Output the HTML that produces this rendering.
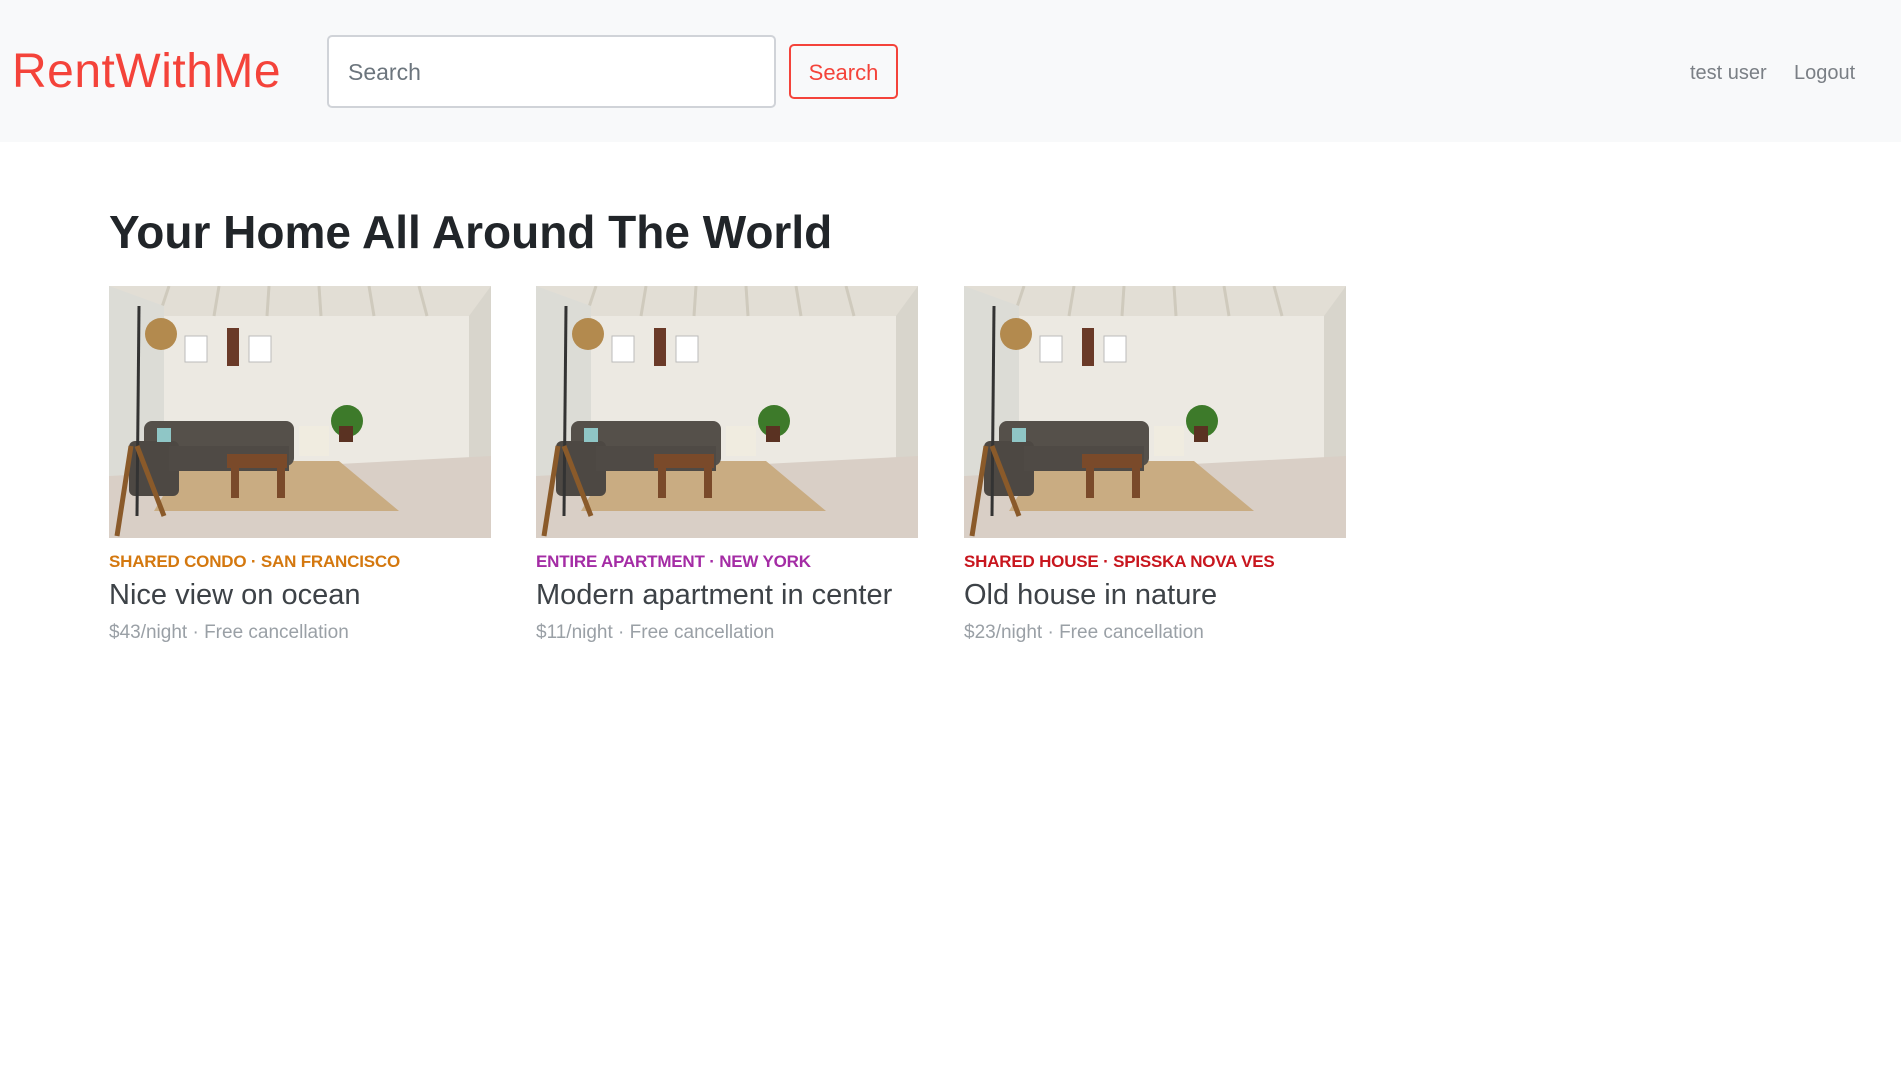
<!DOCTYPE html>
<html><head><meta charset="utf-8"><style>
*{box-sizing:border-box;margin:0;padding:0}
body{width:1901px;height:1080px;background:#fff;font-family:"Liberation Sans",sans-serif;overflow:hidden;position:relative}
.nav{position:absolute;left:0;top:0;width:1901px;height:142px;background:#f8f9fa}
.logo{position:absolute;left:12px;top:44px;font-size:48px;color:#f4433a;letter-spacing:0.5px;line-height:56px}
.inp{position:absolute;left:327px;top:35px;width:449px;height:73px;border:2px solid #d0d3d8;border-radius:5px;background:#fff;font-size:23px;color:#6c757d;padding:22px 0 0 19px}
.btn{position:absolute;left:789px;top:44px;width:109px;height:55px;border:2px solid #f4433a;border-radius:5px;color:#f4433a;font-size:22px;text-align:center;line-height:53px}
.lnk{position:absolute;top:60px;font-size:20px;color:#7a7f85;line-height:26px}
h1{position:absolute;left:109px;top:204px;font-size:46px;font-weight:bold;color:#212529;line-height:56px}
.card{position:absolute;top:286px;width:382px}
.card svg{display:block;width:382px;height:252px}
.sub{margin-top:14px;font-size:17px;font-weight:bold;line-height:20px;letter-spacing:-0.2px}
.t{font-size:29px;color:#3d4247;line-height:36px;margin-top:5px}
.p{font-size:19px;color:#9aa0a6;line-height:24px;margin-top:8px}
</style></head><body>
<svg width="0" height="0" style="position:absolute"><defs>
<g id="room">
<rect width="382" height="252" fill="#ece9e2"/>
<rect x="0" y="0" width="382" height="30" fill="#e2ded5"/>
<g stroke="#cfcabd" stroke-width="3"><line x1="60" y1="0" x2="50" y2="30"/><line x1="110" y1="0" x2="105" y2="30"/><line x1="160" y1="0" x2="158" y2="30"/><line x1="210" y1="0" x2="212" y2="30"/><line x1="260" y1="0" x2="265" y2="30"/><line x1="310" y1="0" x2="318" y2="30"/></g>
<polygon points="0,0 55,20 55,200 0,252" fill="#dcdcd6"/>
<polygon points="382,0 360,30 360,180 382,200" fill="#d8d5cc"/>
<polygon points="0,190 382,170 382,252 0,252" fill="#d9cfc6"/>
<rect x="76" y="50" width="22" height="26" fill="#fff" stroke="#bbb"/>
<rect x="140" y="50" width="22" height="26" fill="#fff" stroke="#bbb"/>
<rect x="118" y="42" width="12" height="38" fill="#6a3a28"/>
<polygon points="75,175 230,175 290,225 45,225" fill="#c9ac82"/>
<rect x="35" y="135" width="150" height="45" rx="8" fill="#55504a"/>
<rect x="20" y="155" width="50" height="55" rx="6" fill="#4d4843"/>
<rect x="60" y="160" width="120" height="25" fill="#4f4a45"/>
<rect x="48" y="142" width="14" height="14" fill="#8fc6c6"/>
<rect x="118" y="168" width="60" height="14" fill="#7a4a2a"/>
<rect x="122" y="182" width="8" height="30" fill="#7a4a2a"/><rect x="168" y="182" width="8" height="30" fill="#7a4a2a"/>
<rect x="190" y="140" width="30" height="30" fill="#f0ece0"/>
<circle cx="238" cy="135" r="16" fill="#3d7a2a"/><rect x="230" y="140" width="14" height="16" fill="#5a3222"/>
<line x1="30" y1="20" x2="28" y2="230" stroke="#333" stroke-width="3"/>
<line x1="22" y1="160" x2="8" y2="250" stroke="#8a5a2a" stroke-width="5"/>
<line x1="28" y1="160" x2="55" y2="230" stroke="#8a5a2a" stroke-width="5"/>
<circle cx="52" cy="48" r="16" fill="#b38a4e"/>
</g></defs></svg>
<div class="nav">
<div class="logo">RentWithMe</div>
<div class="inp">Search</div>
<div class="btn">Search</div>
<div class="lnk" style="left:1690px">test user</div>
<div class="lnk" style="left:1794px">Logout</div>
</div>
<h1>Your Home All Around The World</h1>
<div class="card" style="left:109px"><svg viewBox="0 0 382 252"><use href="#room"/></svg>
<div class="sub" style="color:#d4780f">SHARED CONDO · SAN FRANCISCO</div><div class="t">Nice view on ocean</div><div class="p">$43/night · Free cancellation</div></div>
<div class="card" style="left:536px"><svg viewBox="0 0 382 252"><use href="#room"/></svg>
<div class="sub" style="color:#a42ca5">ENTIRE APARTMENT · NEW YORK</div><div class="t">Modern apartment in center</div><div class="p">$11/night · Free cancellation</div></div>
<div class="card" style="left:964px"><svg viewBox="0 0 382 252"><use href="#room"/></svg>
<div class="sub" style="color:#c8161e">SHARED HOUSE · SPISSKA NOVA VES</div><div class="t">Old house in nature</div><div class="p">$23/night · Free cancellation</div></div>
</body></html>
